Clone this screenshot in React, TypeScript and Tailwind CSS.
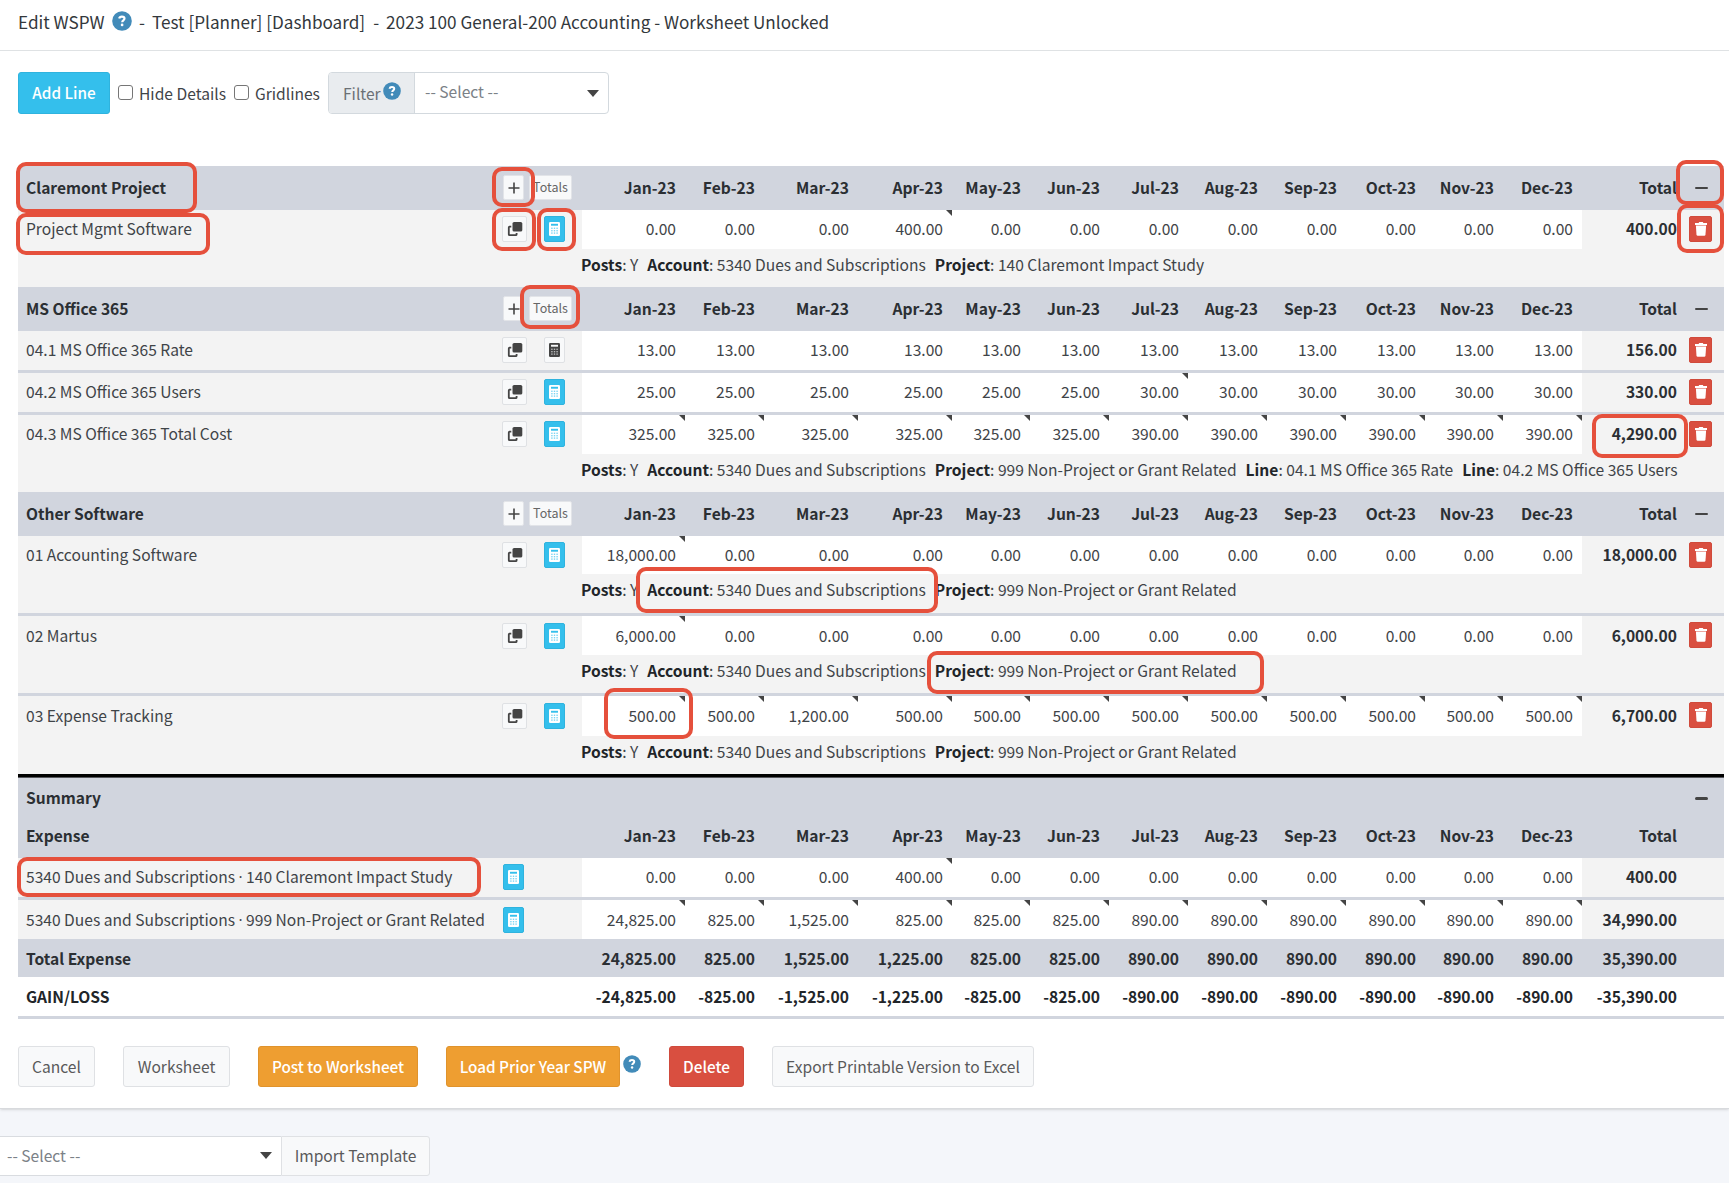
import React from "react";

const MONTHS = ["Jan-23", "Feb-23", "Mar-23", "Apr-23", "May-23", "Jun-23", "Jul-23", "Aug-23", "Sep-23", "Oct-23", "Nov-23", "Dec-23"];

const ROW =
  "grid grid-cols-[484px_80px_103px_79px_94px_94px_78px_79px_79px_79px_79px_79px_78px_79px_104px_38px]";

const same = (v: string, n = 12): string[] => Array(n).fill(v);

const ZERO_APR = ["0.00", "0.00", "0.00", "400.00", ...same("0.00", 8)];

function Help({ className = "h-[20px] w-[20px]" }: { className?: string }) {
  return (
    <svg viewBox="0 0 20 20" className={"shrink-0 " + className}>
      <circle cx="10" cy="10" r="9.8" fill="#428bb9" />
      <path d="M7.2 7.5c.3-1.300 1.400-1.900 2.700-1.900 1.600 0 2.600.8 2.600 2 0 1.700-2.300 1.700-2.300 3.600" fill="none" stroke="#fff" strokeWidth="2.200" />
      <circle cx="10.100" cy="13.900" r="1.350" fill="#fff" />
    </svg>
  );
}

function CopyButton() {
  return (
    <button className="flex h-[26px] w-[25px] items-center justify-center rounded-[2px] border border-[#dfe1e4] bg-[#f8f9fa]">
      <svg viewBox="0 0 16 16" className="h-4 w-4 shrink-0">
        <rect x="5.500" y="1" width="9.800" height="9.500" rx="1.600" fill="#444" />
        <path d="M4.300 5.700H2.600q-.8 0-.8.8v6.900q0 .8.8.8h6.200q.8 0 .8-.8V12" fill="none" stroke="#444" strokeWidth="1.800" />
      </svg>
    </button>
  );
}

function CalcButton({ plain = false }: { plain?: boolean }) {
  const ink = plain ? "#444" : "#fff";
  const hole = plain ? "#f8f9fa" : "#34bfec";
  return (
    <button
      className={
        plain
          ? "flex h-[26px] w-[21px] items-center justify-center rounded-[2px] border border-[#dfe1e4] bg-[#f8f9fa]"
          : "flex h-[26px] w-[21px] items-center justify-center rounded-[2px] border border-[#2fb3de] bg-[#34bfec]"
      }
    >
      <svg viewBox="0 0 11 14" className="h-[14px] w-[11px] shrink-0">
        <rect width="11" height="14" rx="1.300" fill={ink} />
        <rect x="2" y="1.800" width="7" height="1.900" fill={hole} />
        {[5.6, 8, 10.4].map((y) =>
          [2.2, 4.8, 7.4].map((x) => <rect key={x + "-" + y} x={x} y={y} width="1.400" height="1.400" fill={hole} opacity=".65" />)
        )}
      </svg>
    </button>
  );
}

function TrashButton() {
  return (
    <button className="ml-[3px] mt-[6px] flex h-[26px] w-[23px] items-center justify-center rounded-[2px] border border-[#d04a3b] bg-[#d94f40]">
      <svg viewBox="0 0 14 16" className="h-4 w-[14px] shrink-0" fill="#fff">
        <path d="M1 1.900h3.600L5.200 1h3.600l.6.900H13v2.200H1z" />
        <path d="M1.900 4.400h10.200l-.6 9.200q-.1 1.200-1.200 1.200H3.700q-1.100 0-1.200-1.200z" />
      </svg>
    </button>
  );
}

function Minus() {
  return <span className="ml-[9px] mt-[2px] h-[2.500px] w-[13px] self-center rounded-sm bg-[#444]" />;
}

function MonthHeads() {
  return (
    <>
      {MONTHS.map((m) => (
        <span key={m} className="self-center pr-[9px] text-right">{m}</span>
      ))}
      <span className="self-center pr-[9px] text-right">Total</span>
    </>
  );
}

function GroupHeader({ title }: { title: string }) {
  return (
    <div className={`${ROW} h-[44px] bg-[#d1d5de] pb-[2px] font-bold text-[#2b2f33]`}>
      <span className="self-center pl-2">{title}</span>
      <span className="mt-[9px] flex gap-[5px] pl-[1px] font-normal">
        <button className="flex h-[25px] w-[21px] items-center justify-center rounded-[2px] border border-[#e2e4e8] bg-[#f8f9fa]">
          <svg viewBox="0 0 12 12" className="h-3 w-3 shrink-0">
            <path d="M6 .5v11M.5 6h11" stroke="#444" strokeWidth="1.600" />
          </svg>
        </button>
        <button className="flex h-[25px] w-[43px] items-center justify-center rounded-[2px] border border-[#e2e4e8] bg-[#f8f9fa] pb-px text-[12.500px] leading-none text-[#666]">
          Totals
        </button>
      </span>
      <MonthHeads />
      <Minus />
    </div>
  );
}

type LineProps = {
  name: React.ReactNode;
  values: string[];
  total: string;
  marks?: number[];
  h: string;
  plain?: boolean;
  summary?: boolean;
  low?: boolean;
};

function Line({ name, values, total, marks = [], h, plain, summary, low }: LineProps) {
  const pad = low ? "pt-[7px]" : "pt-[6px]";
  return (
    <div className={`${ROW} ${h} bg-[#f3f3f3]`}>
      <span className={`whitespace-nowrap pl-2 ${pad}`}>{name}</span>
      <span className={`flex items-start gap-[17px] ${pad} ${summary ? "pl-px" : ""}`}>
        {!summary && <CopyButton />}
        <CalcButton plain={plain} />
      </span>
      {values.map((v, i) => (
        <span key={i} className={`relative bg-white pr-[9px] text-right ${pad}`}>
          {v}
          {marks.includes(i) && (
            <svg viewBox="0 0 6 6" className="absolute right-0 top-0 h-[6px] w-[6px]">
              <path d="M0 0h6v6z" fill="#444" />
            </svg>
          )}
        </span>
      ))}
      <span className={`pr-[9px] text-right font-bold text-[#2b2f33] ${pad}`}>{total}</span>
      {!summary && <TrashButton />}
    </div>
  );
}

function Detail({ items, h }: { items: [string, string][]; h: string }) {
  return (
    <div className={`flex ${h} gap-[9px] whitespace-nowrap bg-[#f3f3f3] pl-[563px] pt-[3px]`}>
      {items.map(([k, v], i) => (
        <span key={i}>
          <b className="text-[#212529]">{k}</b>: {v}
        </span>
      ))}
    </div>
  );
}

const Rule = () => <div className="h-[3px] bg-[#d1d5de]" />;

function Dotted({ a, b }: { a: string; b: string }) {
  return (
    <>
      {a} <span className="font-['Open_Sans',sans-serif] leading-none">·</span> {b}
    </>
  );
}

const ALL = MONTHS.map((_, i) => i);
const POSTS: [string, string] = ["Posts", "Y"];
const ACCOUNT: [string, string] = ["Account", "5340 Dues and Subscriptions"];
const P999: [string, string] = ["Project", "999 Non-Project or Grant Related"];

const HIGHLIGHTS = [
  "left-[16px] top-[162px] w-[181px] h-[51px]",
  "left-[16px] top-[213px] w-[194px] h-[42px]",
  "left-[492px] top-[167px] w-[43px] h-[40px]",
  "left-[492px] top-[208px] w-[44px] h-[43px]",
  "left-[537px] top-[208px] w-[39px] h-[43px]",
  "left-[520px] top-[285px] w-[60px] h-[44px]",
  "left-[1676px] top-[160px] w-[48px] h-[45px]",
  "left-[1677px] top-[204px] w-[47px] h-[49px]",
  "left-[1592px] top-[414px] w-[96px] h-[44px]",
  "left-[636px] top-[567px] w-[302px] h-[46px]",
  "left-[927px] top-[651px] w-[337px] h-[43px]",
  "left-[604px] top-[688px] w-[89px] h-[51px]",
  "left-[17px] top-[857px] w-[464px] h-[40px]",
];

const BTN = "flex items-center justify-center whitespace-nowrap rounded-[3px] border pb-[2px]";
const LIGHT = "h-[41px] border-[#dfe1e4] bg-[#f8f9fa] text-[#5a5a5a]";
const WARN = "h-[41px] border-[#e0932c] bg-[#ee9e31] text-white font-medium text-[15.300px]";

export default function App() {
  return (
    <div className="relative h-[1183px] w-[1729px] overflow-hidden bg-[#f4f6fa] font-['Noto_Sans_CJK_SC','Noto_Sans',sans-serif] text-[15.600px] leading-6 text-[#3f4448]">
      <div className="h-[1109px] border-b border-[#d8dadd] bg-white shadow-sm">
        <header className="flex h-[51px] items-center whitespace-nowrap border-b border-[#dfe2e4] pb-[6px] pl-[18px] text-[17.150px] text-[#33383c]">
          <span className="w-[94px]">Edit WSPW</span>
          <Help className="mb-[3px] h-[20px] w-[20px]" />
          <span className="ml-[7px]">-</span>
          <span className="ml-[7px]">Test [Planner] [Dashboard]</span>
          <span className="ml-[8px]">-</span>
          <span className="ml-[7px]">2023 100 General-200 Accounting - Worksheet Unlocked</span>
        </header>

        <div className="flex h-[115px] items-start pl-[18px] pt-[21px]">
          <button className={`${BTN} h-[42px] w-[92px] border-[#2fb3de] bg-[#34bfec] text-[15.300px] font-medium text-white`}>Add Line</button>
          <label className="ml-[8px] flex h-[42px] items-center">
            <span className="mb-px h-[15px] w-[15px] rounded-[3px] border border-[#767676] bg-white" />
            <span className="ml-[6px] w-[95px] whitespace-nowrap">Hide Details</span>
          </label>
          <label className="flex h-[42px] items-center">
            <span className="mb-px h-[15px] w-[15px] rounded-[3px] border border-[#767676] bg-white" />
            <span className="ml-[6px] w-[73px]">Gridlines</span>
          </label>
          <div className="flex h-[42px] w-[281px] overflow-hidden rounded-[4px] border border-[#d3d9de]">
            <span className="flex w-[86px] items-center border-r border-[#d3d9de] bg-[#e9ecef] pl-[14px] text-[#6b7075]">
              <span className="w-[40px]">Filter</span>
              <Help className="mb-[5px] h-[18px] w-[18px]" />
            </span>
            <span className="flex flex-1 items-center justify-between pb-[5px] pl-[10px] pr-[9px] text-[#7b8187]">
              -- Select --
              <svg viewBox="0 0 12 7" className="mt-[5px] h-[7px] w-[12px]"><path d="M0 0h12L6 7z" fill="#444" /></svg>
            </span>
          </div>
        </div>

        <main className="ml-[18px] w-[1706px]">
          <GroupHeader title="Claremont Project" />
          <Line name="Project Mgmt Software" values={ZERO_APR} total="400.00" marks={[3]} h="h-[39px]" />
          <Detail h="h-[38px]" items={[POSTS, ACCOUNT, ["Project", "140 Claremont Impact Study"]]} />

          <GroupHeader title="MS Office 365" />
          <Line name="04.1 MS Office 365 Rate" values={same("13.00")} total="156.00" h="h-[39px]" plain />
          <Rule />
          <Line name="04.2 MS Office 365 Users" values={[...same("25.00", 6), ...same("30.00", 6)]} total="330.00" marks={[6]} h="h-[39px]" />
          <Rule />
          <Line name="04.3 MS Office 365 Total Cost" values={[...same("325.00", 6), ...same("390.00", 6)]} total="4,290.00" marks={ALL} h="h-[39px]" />
          <Detail
            h="h-[38px]"
            items={[POSTS, ACCOUNT, P999, ["Line", "04.1 MS Office 365 Rate"], ["Line", "04.2 MS Office 365 Users"]]}
          />

          <GroupHeader title="Other Software" />
          <Line name="01 Accounting Software" values={["18,000.00", ...same("0.00", 11)]} total="18,000.00" marks={[0]} h="h-[38px]" />
          <Detail h="h-[39px]" items={[POSTS, ACCOUNT, P999]} />
          <Rule />
          <Line name="02 Martus" values={["6,000.00", ...same("0.00", 11)]} total="6,000.00" marks={[0]} h="h-[39px]" low />
          <Detail h="h-[38px]" items={[POSTS, ACCOUNT, P999]} />
          <Rule />
          <Line
            name="03 Expense Tracking"
            values={["500.00", "500.00", "1,200.00", ...same("500.00", 9)]}
            total="6,700.00"
            marks={ALL}
            h="h-[40px]"
            low
          />
          <Detail h="h-[38px]" items={[POSTS, ACCOUNT, P999]} />

          <div className="h-[4px] border-b border-b-[#55565a] bg-black" />
          <div className={`${ROW} h-[39px] bg-[#d1d5de] font-bold text-[#2b2f33]`}>
            <span className="self-center pb-[2px] pl-2">Summary</span>
            <span className="col-span-14" />
            <Minus />
          </div>
          <div className={`${ROW} h-[41px] bg-[#d1d5de] pb-[5px] font-bold text-[#2b2f33]`}>
            <span className="self-center pl-2">Expense</span>
            <span />
            <MonthHeads />
          </div>
          <Line
            name={<Dotted a="5340 Dues and Subscriptions" b="140 Claremont Impact Study" />}
            values={ZERO_APR}
            total="400.00"
            marks={[3]}
            h="h-[39px]"
            summary
          />
          <Rule />
          <Line
            name={<Dotted a="5340 Dues and Subscriptions" b="999 Non-Project or Grant Related" />}
            values={["24,825.00", "825.00", "1,525.00", ...same("825.00", 3), ...same("890.00", 6)]}
            total="34,990.00"
            marks={ALL}
            h="h-[39px]"
            summary
            low
          />
          <div className={`${ROW} h-[38px] items-center bg-[#d1d5de] font-bold text-[#2b2f33]`}>
            <span className="pl-2">Total Expense</span>
            <span />
            {["24,825.00", "825.00", "1,525.00", "1,225.00", "825.00", "825.00", ...same("890.00", 6), "35,390.00"].map((v, i) => (
              <span key={i} className="pr-[9px] text-right">{v}</span>
            ))}
          </div>
          <div className={`${ROW} h-[39px] items-center pb-px font-bold text-[#212529]`}>
            <span className="pl-2">GAIN/LOSS</span>
            <span />
            {["-24,825.00", "-825.00", "-1,525.00", "-1,225.00", "-825.00", "-825.00", ...same("-890.00", 6), "-35,390.00"].map((v, i) => (
              <span key={i} className="pr-[9px] text-right">{v}</span>
            ))}
          </div>
          <Rule />

          <div className="mt-[27px] flex">
            <button className={`${BTN} ${LIGHT} w-[77px]`}>Cancel</button>
            <button className={`${BTN} ${LIGHT} ml-[28px] w-[107px]`}>Worksheet</button>
            <button className={`${BTN} ${WARN} ml-[28px] w-[160px]`}>Post to Worksheet</button>
            <button className={`${BTN} ${WARN} ml-[28px] w-[174px]`}>Load Prior Year SPW</button>
            <Help className="ml-[3px] mt-[9px] h-[18px] w-[18px]" />
            <button className={`${BTN} ml-[28px] h-[41px] w-[75px] border-[#cf4a3c] bg-[#d94f40] text-[15.300px] font-medium text-white`}>Delete</button>
            <button className={`${BTN} ${LIGHT} ml-[28px] w-[262px]`}>Export Printable Version to Excel</button>
          </div>
        </main>
      </div>

      <div className="mt-[27px] flex h-[40px] w-[430px]">
        <span className="flex w-[281px] items-center justify-between border-y border-[#d9dce0] bg-white pb-[3px] pl-[7px] pr-[9px] text-[#7b8187]">
          -- Select --
          <svg viewBox="0 0 12 7" className="mt-px h-[7px] w-[12px]"><path d="M0 0h12L6 7z" fill="#444" /></svg>
        </span>
        <button className="w-[149px] rounded-r-[3px] border border-[#dfe1e4] bg-[#f8f9fa] pb-[2px] text-[#5a5a5a]">Import Template</button>
      </div>

      {HIGHLIGHTS.map((pos) => (
        <span key={pos} className={`pointer-events-none absolute rounded-[10px] border-4 border-[#e5503c] ${pos}`} />
      ))}
    </div>
  );
}
